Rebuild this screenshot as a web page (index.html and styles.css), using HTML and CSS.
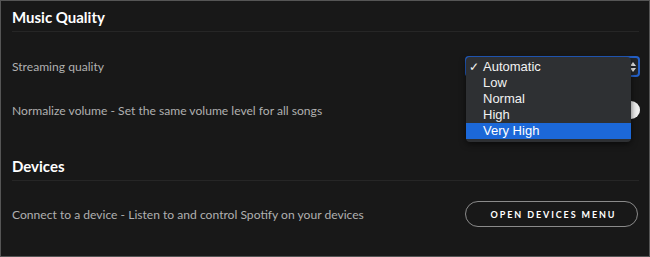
FILE: index.html
```html
<!DOCTYPE html>
<html>
<head>
<meta charset="utf-8">
<link rel="stylesheet" href="styles.css">
</head>
<body>
<div class="frame">
  <section class="section">
    <h2 class="heading">Music Quality</h2>
    <div class="row row-first">
      <span class="label">Streaming quality</span>
      <div class="select">
        <span class="arrows"><span class="up"></span><span class="down"></span></span>
        <ul class="menu">
          <li class="opt"><span class="check">✓</span>Automatic</li>
          <li class="opt">Low</li>
          <li class="opt">Normal</li>
          <li class="opt">High</li>
          <li class="opt opt-active">Very High</li>
        </ul>
      </div>
    </div>
    <div class="row">
      <span class="label">Normalize volume - Set the same volume level for all songs</span>
      <div class="toggle"><span class="knob"></span></div>
    </div>
  </section>
  <section class="section">
    <h2 class="heading heading-second">Devices</h2>
    <div class="row row-device">
      <span class="label">Connect to a device - Listen to and control Spotify on your devices</span>
      <button class="btn">OPEN DEVICES MENU</button>
    </div>
  </section>
</div>
</body>
</html>
```
FILE: styles.css
```css
* { box-sizing: border-box; }
html, body { margin: 0; padding: 0; background: #181818; }
.frame {
  width: 650px;
  height: 257px;
  border: 1px solid #555;
  background: #181818;
  padding: 0 10px 0 11px;
  font-family: "Lato", "Liberation Sans", sans-serif;
  overflow: hidden;
}
.heading {
  margin: 0;
  padding: 6px 0 4px;
  line-height: 20px;
  font-size: 15px;
  font-weight: 700;
  color: #fff;
  border-bottom: 1px solid #262626;
}
.heading-second { padding-top: 24px; }
.row {
  height: 44px;
  display: flex;
  align-items: center;
  justify-content: space-between;
}
.row-first { margin-top: 12px; }
.row-device { margin-top: 11px; }
.label {
  font-size: 12.1px;
  color: #b0b0b0;
}
.select {
  position: relative;
  width: 175px;
  height: 21px;
  margin-right: -1px;
  border: 2px solid #2460c8;
  border-radius: 4px;
  background: #23262b;
}
.arrows {
  position: absolute;
  right: 2px;
  top: 4px;
  display: flex;
  flex-direction: column;
  gap: 2px;
}
.up, .down {
  width: 0; height: 0;
  border-left: 3px solid transparent;
  border-right: 3px solid transparent;
}
.up { border-bottom: 4px solid #e8e8e8; }
.down { border-top: 4px solid #e8e8e8; }
.menu {
  position: absolute;
  left: -1px;
  top: -1px;
  width: 165px;
  margin: 0;
  padding: 2px 0 3px;
  list-style: none;
  background: #2e3033;
  border-radius: 4px;
  box-shadow: 0 2px 6px rgba(0,0,0,0.6);
  z-index: 2;
  font-family: "Liberation Sans", "Noto Sans", sans-serif;
}
.opt {
  position: relative;
  height: 16px;
  line-height: 16px;
  padding-left: 17px;
  font-size: 13px;
  color: #f2f2f2;
}
.opt-active { background: #1c68d8; color: #fff; }
.check {
  position: absolute;
  left: 3px;
  top: 0;
  font-size: 12px;
}
.toggle {
  position: relative;
  width: 34px;
  height: 14px;
  border-radius: 7px;
  background: #535353;
  margin-right: -1px;
}
.knob {
  position: absolute;
  right: 0;
  top: -2px;
  width: 18px;
  height: 18px;
  border-radius: 50%;
  background: #f0f0f0;
}
.btn {
  width: 173px;
  height: 26px;
  border: 1px solid #8a8a8a;
  border-radius: 13px;
  background: transparent;
  color: #fff;
  font-family: "Lato", "Liberation Sans", sans-serif;
  font-size: 9px;
  font-weight: 700;
  letter-spacing: 1.9px;
  padding: 0 0 0 4px;
  margin-right: 1px;
}
```
